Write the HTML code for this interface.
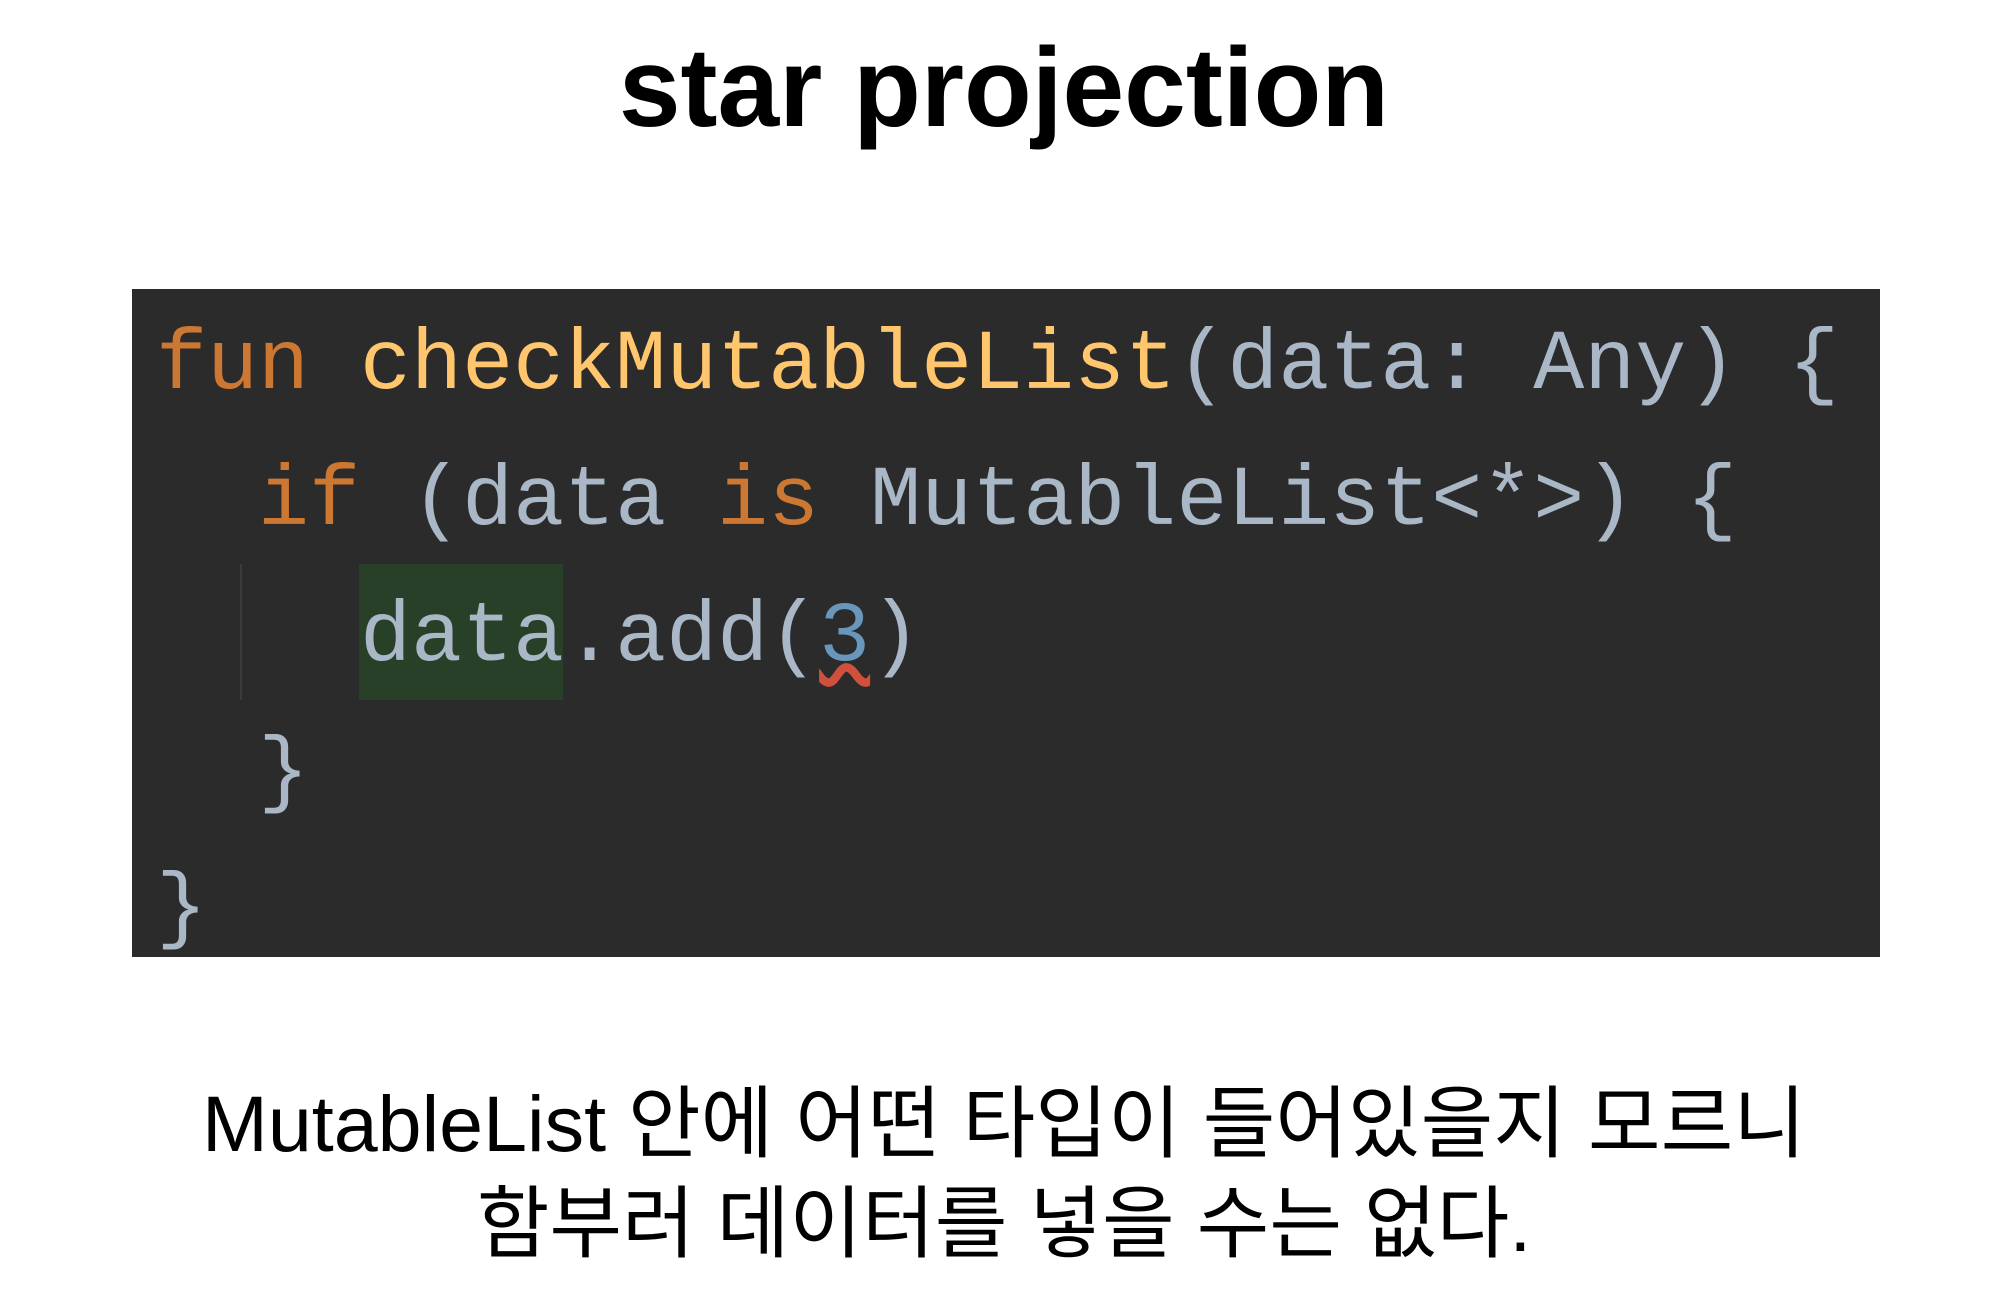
<!DOCTYPE html>
<html><head><meta charset="utf-8"><style>
html,body{margin:0;padding:0;background:#fff;width:2008px;height:1308px;overflow:hidden;position:relative}
.t{position:absolute;left:0;width:2008px;text-align:center;top:32px;font:bold 112px/1 "Liberation Sans Narrow","Liberation Sans",sans-serif;color:#000;letter-spacing:0px}
.t span{display:inline-block;transform:scaleX(0.99)}
.box{position:absolute;left:132px;top:289px;width:1748px;height:668px;background:#2b2b2b}
.hl{position:absolute;left:359px;top:564px;width:204px;height:136px;background:#283f28}
.guide{position:absolute;left:240px;top:564px;width:2px;height:136px;background:#3a3a3a}
.ln{position:absolute;left:156px;font:85px/1 "Liberation Mono",monospace;color:#a9b7c6;white-space:pre}
.k{color:#cc7832}.f{color:#ffc66d}.n{color:#6897bb;text-decoration:underline wavy #d0503c}
.s{position:absolute;left:0;width:2008px;text-align:center;font:79px/1 "Liberation Sans","Noto Sans CJK KR",sans-serif;color:#000;white-space:nowrap}
.s span{display:inline-block;transform:scaleX(1.0)}
</style></head><body>
<div class="t"><span>star projection</span></div>
<div class="box"></div>
<div class="hl"></div>
<div class="guide"></div>
<div class="ln" style="top:323px"><span class="k">fun</span> <span class="f">checkMutableList</span>(data: Any) {</div>
<div class="ln" style="top:459px">  <span class="k">if</span> (data <span class="k">is</span> MutableList&lt;*&gt;) {</div>
<div class="ln" style="top:595px">    data.add(<span class="n">3</span>)</div>
<div class="ln" style="top:731px">  }</div>
<div class="ln" style="top:867px">}</div>
<div class="s" style="top:1084px"><span>MutableList 안에 어떤 타입이 들어있을지 모르니</span></div>
<div class="s" style="top:1184px"><span>함부러 데이터를 넣을 수는 없다.</span></div>
</body></html>
